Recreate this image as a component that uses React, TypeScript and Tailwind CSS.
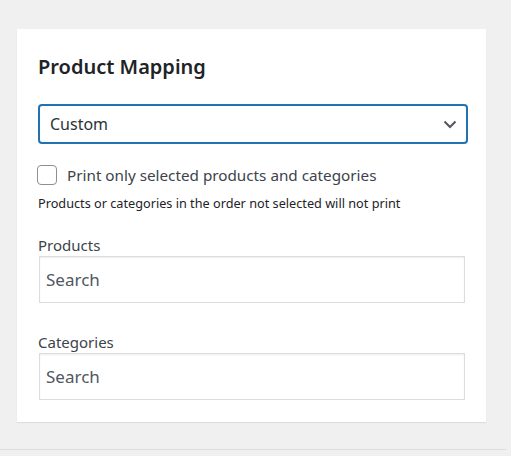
import React, { useState } from 'react';

const font = { fontFamily: '"Noto Sans", "Open Sans", sans-serif' };

export default function App() {
  const [mapping, setMapping] = useState('custom');
  const [onlySelected, setOnlySelected] = useState(false);

  return (
    <div className="w-[511px] h-[456px] bg-[#f0f0f1] overflow-hidden" style={font}>
      <div className="pt-[29px] pl-[17px] h-[450px] border-b border-[#dcdcde] w-[506px]">
        <div className="w-[469px] h-[393px] bg-white shadow-[0_1px_1px_rgba(0,0,0,0.08)] pt-[24px] px-[21px]">
          <h2 className="text-[20px] leading-[28px] font-semibold text-[#1d2327]">Product Mapping</h2>

          {/* Mapping mode */}
          <div className="relative mt-[23px] w-[430px]">
            <select
              value={mapping}
              onChange={(e) => setMapping(e.target.value)}
              className="appearance-none w-full h-[40px] rounded-[4px] border-2 border-[#2271b1] pl-[10px] text-[16px] text-[#2c3338] bg-white outline-none"
            >
              <option value="all">All</option>
              <option value="custom">Custom</option>
            </select>
            <svg className="absolute right-[10px] top-[13px] pointer-events-none" width="16" height="14" viewBox="0 0 16 14">
              <path d="M2.5 4.5 L8 10 L13.5 4.5" fill="none" stroke="#50575e" strokeWidth="2" />
            </svg>
          </div>

          <label className="flex items-center mt-[20px] gap-[10px] -ml-[1px] cursor-pointer">
            <input
              type="checkbox"
              checked={onlySelected}
              onChange={(e) => setOnlySelected(e.target.checked)}
              className="appearance-none w-[20px] h-[20px] rounded-[4px] border border-[#8c8f94] bg-white checked:bg-[#2271b1]"
            />
            <span className="text-[15.25px] text-[#3c434a]">Print only selected products and categories</span>
          </label>
          <p className="mt-[7px] text-[12.7px] leading-[18px] text-[#1d2327]">
            Products or categories in the order not selected will not print
          </p>

          <div className="mt-[23px]">
            <div className="text-[15px] leading-[20px] text-[#3c434a]">Products</div>
            <input
              placeholder="Search"
              className="mt-[1px] ml-[1px] w-[426px] h-[47px] border border-[#dcdcde] shadow-[inset_0_1px_2px_rgba(0,0,0,0.07)] px-[6px] text-[17px] text-[#2c3338] placeholder:text-[#50575e] outline-none"
            />
          </div>

          <div className="mt-[29px]">
            <div className="text-[15px] leading-[20px] text-[#3c434a]">Categories</div>
            <input
              placeholder="Search"
              className="mt-[1px] ml-[1px] w-[426px] h-[47px] border border-[#dcdcde] shadow-[inset_0_1px_2px_rgba(0,0,0,0.07)] px-[6px] text-[17px] text-[#2c3338] placeholder:text-[#50575e] outline-none"
            />
          </div>
        </div>
      </div>
    </div>
  );
}
